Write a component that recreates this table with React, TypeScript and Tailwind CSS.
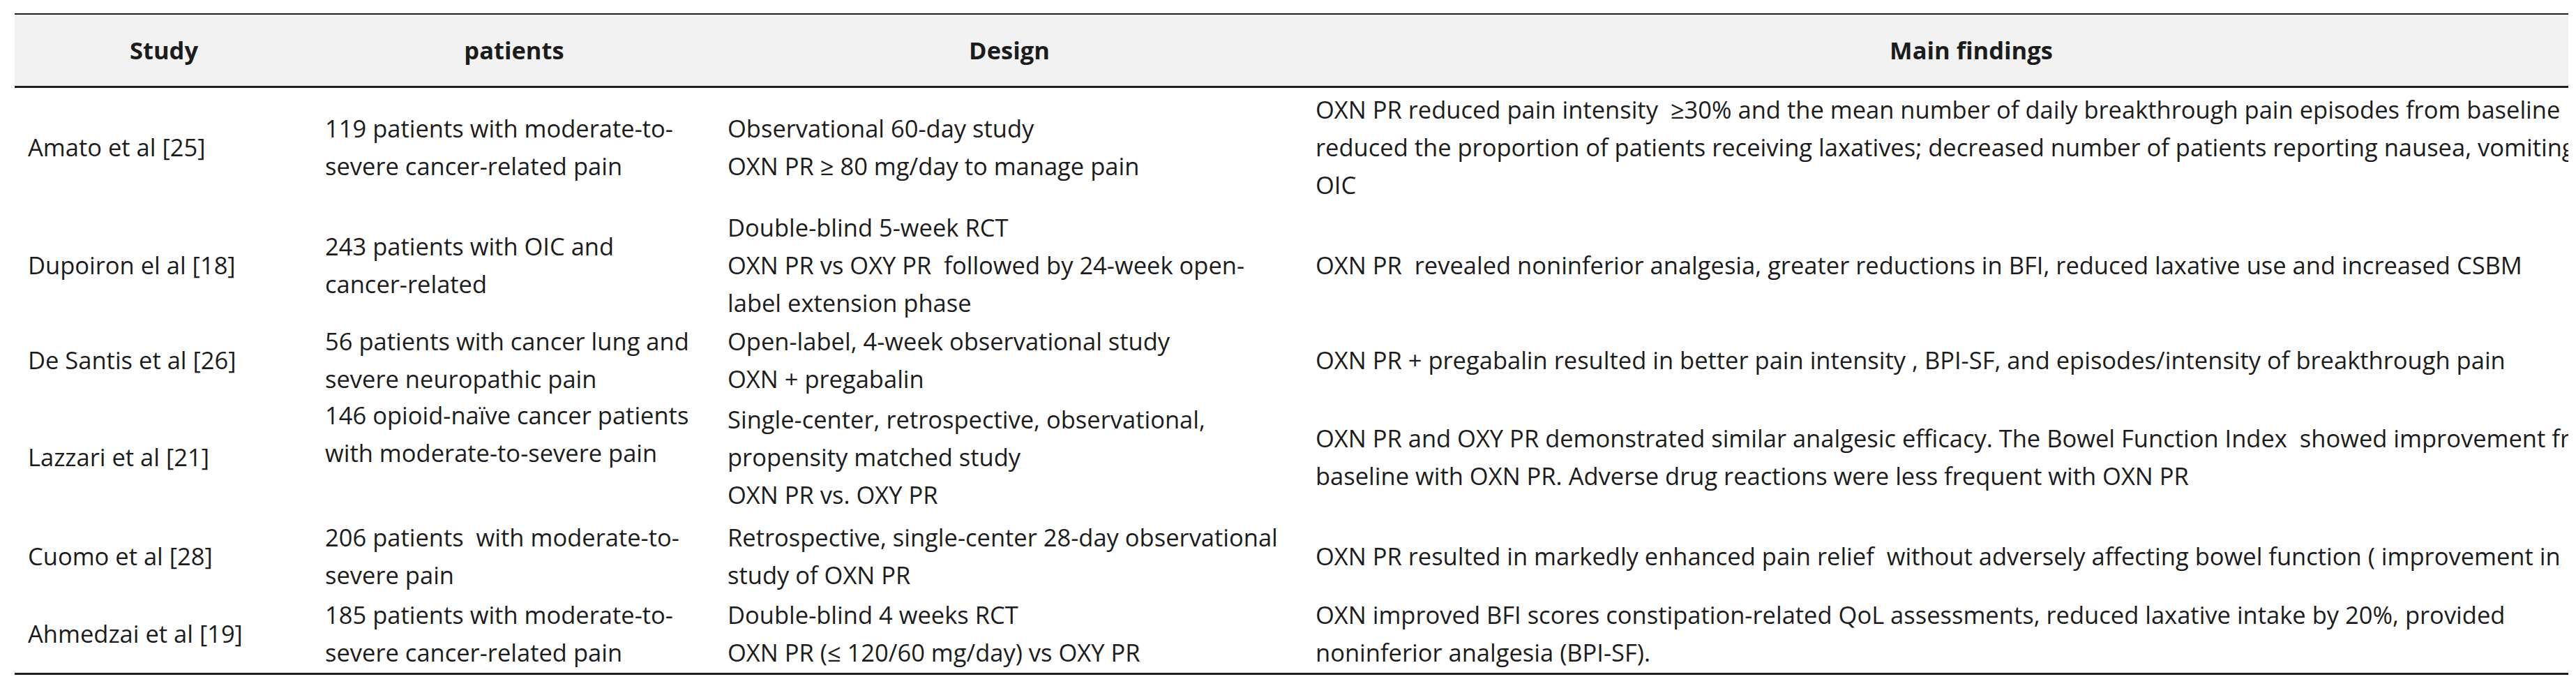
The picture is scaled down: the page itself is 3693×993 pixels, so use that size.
import React from "react";

type Cell = { lines: string[]; extra?: string };
type RowData = { h: string; cells: Cell[] };

const rows: RowData[] = [
  {
    h: "h-[169px]",
    cells: [
      { lines: ["Amato et al [25]"] },
      { lines: ["119 patients with moderate-to-", "severe cancer-related pain"] },
      { lines: ["Observational 60-day study", "OXN PR \u2265 80 mg/day to manage pain"] },
      {
        lines: [
          "OXN PR reduced pain intensity  \u226530% and the mean number of daily breakthrough pain episodes from baseline",
          "reduced the proportion of patients receiving laxatives; decreased number of patients reporting nausea, vomiting and",
          "OIC",
        ],
      },
    ],
  },
  {
    h: "h-[170px]",
    cells: [
      { lines: ["Dupoiron el al [18]"] },
      { lines: ["243 patients with OIC and", "cancer-related"] },
      {
        lines: [
          "Double-blind 5-week RCT",
          "OXN PR vs OXY PR  followed by 24-week open-",
          "label extension phase",
        ],
      },
      {
        lines: [
          "OXN PR  revealed noninferior analgesia, greater reductions in BFI, reduced laxative use and increased CSBM",
        ],
      },
    ],
  },
  {
    h: "h-[102px]",
    cells: [
      { lines: ["De Santis et al [26]"] },
      { lines: ["56 patients with cancer lung and", "severe neuropathic pain"] },
      { lines: ["Open-label, 4-week observational study", "OXN + pregabalin"] },
      {
        lines: [
          "OXN PR + pregabalin resulted in better pain intensity , BPI-SF, and episodes/intensity of breakthrough pain",
        ],
      },
    ],
  },
  {
    h: "h-[175px]",
    cells: [
      { lines: ["Lazzari et al [21]"] },
      { lines: ["146 opioid-na\u00efve cancer patients", "with moderate-to-severe pain"], extra: "pb-[66px]" },
      {
        lines: [
          "Single-center, retrospective, observational,",
          "propensity matched study",
          "OXN PR vs. OXY PR",
        ],
      },
      {
        lines: [
          "OXN PR and OXY PR demonstrated similar analgesic efficacy. The Bowel Function Index  showed improvement from",
          "baseline with OXN PR. Adverse drug reactions were less frequent with OXN PR",
        ],
      },
    ],
  },
  {
    h: "h-[110px]",
    cells: [
      { lines: ["Cuomo et al [28]"] },
      { lines: ["206 patients  with moderate-to-", "severe pain"] },
      { lines: ["Retrospective, single-center 28-day observational", "study of OXN PR"] },
      {
        lines: [
          "OXN PR resulted in markedly enhanced pain relief  without adversely affecting bowel function ( improvement in BFI)",
        ],
      },
    ],
  },
  {
    h: "h-[112px]",
    cells: [
      { lines: ["Ahmedzai et al [19]"] },
      { lines: ["185 patients with moderate-to-", "severe cancer-related pain"] },
      { lines: ["Double-blind 4 weeks RCT", "OXN PR (\u2264 120/60 mg/day) vs OXY PR"] },
      {
        lines: [
          "OXN improved BFI scores constipation-related QoL assessments, reduced laxative intake by 20%, provided",
          "noninferior analgesia (BPI-SF).",
        ],
      },
    ],
  },
];

const pads = ["pl-[19px]", "pl-[17px]", "pl-[18px]", "pl-[17px]"];

function Row({ data }: { data: RowData }) {
  return (
    <div className={`grid grid-cols-[428px_576px_844px_1914px] ${data.h}`}>
      {data.cells.map((c, i) => (
        <div
          key={i}
          className={`flex flex-col justify-center overflow-hidden ${pads[i]} ${c.extra ?? ""}`}
        >
          {c.lines.map((l, j) => (
            <div key={j} className="whitespace-pre leading-[54px]">
              {l}
            </div>
          ))}
        </div>
      ))}
    </div>
  );
}

export default function App() {
  return (
    <div className="min-h-screen bg-white pt-[19px] pl-[21px] text-[#1c1c1c] font-['Open_Sans','Noto_Sans',sans-serif] text-[34.5px]">
      <div className="w-[3661px] overflow-hidden">
        <div className="w-[3762px] border-t-[2px] border-b-[3px] border-[#1f1f1f]">
          <div className="grid grid-cols-[428px_576px_844px_1914px] h-[105px] bg-[#f2f2f2] border-b-[3px] border-[#1f1f1f] font-bold">
            <div className="flex items-center justify-center">Study</div>
            <div className="flex items-center justify-center">patients</div>
            <div className="flex items-center justify-center">Design</div>
            <div className="flex items-center justify-center">Main findings</div>
          </div>
          {rows.map((r, i) => (
            <Row key={i} data={r} />
          ))}
        </div>
      </div>
    </div>
  );
}
